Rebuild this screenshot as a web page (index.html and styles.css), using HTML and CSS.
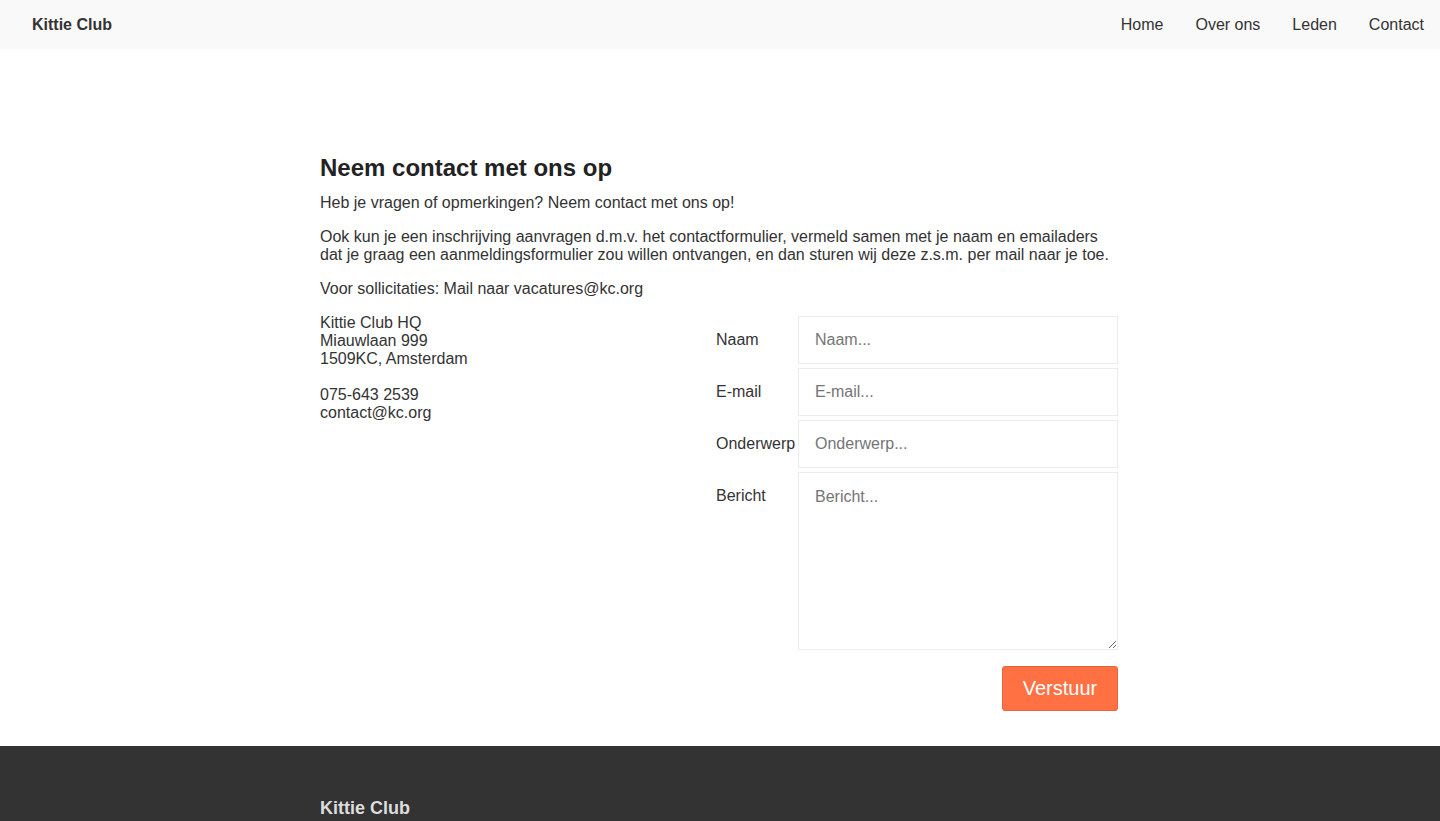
FILE: index.html
```html
<!DOCTYPE html>
<html lang="nl">
<head>
<meta charset="utf-8">
<title>Kittie Club - Contact</title>
<link rel="stylesheet" href="styles.css">
</head>
<body>
<header class="navbar">
  <a class="brand" href="#">Kittie Club</a>
  <nav class="menu">
    <a href="#">Home</a>
    <a href="#">Over ons</a>
    <a href="#">Leden</a>
    <a href="#">Contact</a>
  </nav>
</header>
<main class="content">
  <h2 class="title">Neem contact met ons op</h2>
  <p>Heb je vragen of opmerkingen? Neem contact met ons op!</p>
  <p>Ook kun je een inschrijving aanvragen d.m.v. het contactformulier, vermeld samen met je naam en emailaders dat je graag een aanmeldingsformulier zou willen ontvangen, en dan sturen wij deze z.s.m. per mail naar je toe.</p>
  <p>Voor sollicitaties: Mail naar vacatures@kc.org</p>
  <div class="columns">
    <div class="address">
      <p>Kittie Club HQ<br>Miauwlaan 999<br>1509KC, Amsterdam</p>
      <p>075-643 2539<br>contact@kc.org</p>
    </div>
    <form class="form">
      <label class="label" for="naam">Naam</label>
      <input class="field" id="naam" type="text" placeholder="Naam...">
      <label class="label" for="email">E-mail</label>
      <input class="field" id="email" type="email" placeholder="E-mail...">
      <label class="label" for="onderwerp">Onderwerp</label>
      <input class="field" id="onderwerp" type="text" placeholder="Onderwerp...">
      <label class="label" for="bericht">Bericht</label>
      <textarea class="field area" id="bericht" placeholder="Bericht..."></textarea>
      <div class="actions">
        <button class="submit" type="button">Verstuur</button>
      </div>
    </form>
  </div>
</main>
<footer class="footer">
  <div class="footer-inner">
    <h3 class="footer-brand">Kittie Club</h3>
  </div>
</footer>
</body>
</html>
```

FILE: styles.css
```css
* { box-sizing: border-box; }
html, body { margin: 0; padding: 0; }
body {
  font-family: "Liberation Sans", Arial, Helvetica, sans-serif;
  font-size: 16px;
  line-height: 18px;
  color: #333;
  background: #fff;
}
.navbar {
  height: 49px;
  background: #f9f9f9;
  display: flex;
  align-items: center;
  justify-content: space-between;
  padding-left: 32px;
}
.brand {
  font-weight: bold;
  color: #333;
  text-decoration: none;
}
.menu { display: flex; }
.menu a {
  color: #333;
  text-decoration: none;
  padding: 0 16px;
}
.content {
  width: 798px;
  margin: 0 calc(50% - 400px);
  padding-top: 105px;
  padding-bottom: 35px;
}
.title {
  margin: 0 0 12px;
  font-size: 24px;
  line-height: 28px;
  color: #222;
}
.content p { margin: 0 0 16px; }
.columns {
  display: grid;
  grid-template-columns: 1fr 402px;
  align-items: start;
  margin-top: 11px;
}
.address p { margin: 0 0 18px; }
.form {
  display: grid;
  grid-template-columns: 82px 320px;
  row-gap: 4px;
  margin-top: 2px;
}
.label {
  line-height: 48px;
  color: #333;
  white-space: nowrap;
}
.field {
  height: 48px;
  width: 320px;
  border: 1px solid #ececec;
  background: #fff;
  padding: 0 16px;
  font: inherit;
  color: #333;
  outline: none;
}
.field::placeholder { color: #757575; }
.area {
  height: 178px;
  padding: 15px 16px;
  resize: vertical;
}
.actions {
  grid-column: 1 / -1;
  display: flex;
  justify-content: flex-end;
  margin-top: 12px;
}
.submit {
  width: 116px;
  height: 45px;
  background: #ff7043;
  border: 1px solid #e8623a;
  border-radius: 3px;
  color: #fff;
  font-family: inherit;
  font-size: 20px;
  padding: 0;
}
.footer {
  background: #333;
  min-height: 100px;
}
.footer-inner {
  width: 798px;
  margin: 0 calc(50% - 400px);
  padding-top: 51px;
}
.footer-brand {
  margin: 0;
  font-size: 18px;
  line-height: 22px;
  color: #ddd;
}
```
